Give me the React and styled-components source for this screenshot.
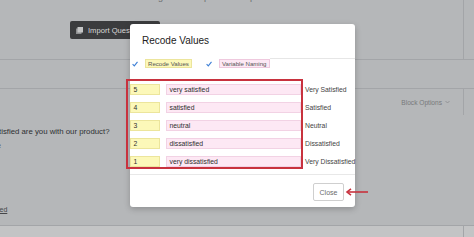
import React from 'react';
import styled, { createGlobalStyle } from 'styled-components';

const GlobalStyle = createGlobalStyle`
  html, body { margin: 0; padding: 0; }
  body {
    width: 474px;
    height: 237px;
    overflow: hidden;
    background: #b5b7b9;
    font-family: "Liberation Sans", Arial, sans-serif;
  }
`;

const Page = styled.div`
  position: relative;
  display: flex;
  flex-direction: column;
  width: 474px;
  height: 237px;
  overflow: hidden;
`;

// background page (dimmed by the modal overlay)
const Split = styled.div`
  display: grid;
  grid-template-columns: 464px 1fr;
  height: ${p => p.h}px;
  border-bottom: ${p => (p.line ? '1px solid #a3a5a8' : 'none')};
  flex-shrink: 0;
`;

const Cell = styled.div`
  display: flex;
  flex-direction: column;
  border-right: ${p => (p.edge ? '1px solid #a3a5a8' : 'none')};
  overflow: hidden;
`;

const TopFragment = styled.div`
  margin-top: -8px;
  margin-left: 158px;
  font-size: 9px;
  line-height: 10px;
  color: #6a6c6e;
  white-space: nowrap;
`;

const ImportButton = styled.div`
  display: flex;
  align-items: center;
  gap: 5px;
  margin: 19px 0 0 70px;
  width: 90px;
  height: 18px;
  padding-left: 6px;
  box-sizing: border-box;
  background: #3b3c3e;
  border-radius: 2px;
  color: #d8d8d8;
  font-size: 7.6px;
  white-space: nowrap;
`;

const BlockOptions = styled.div`
  display: flex;
  align-items: center;
  justify-content: flex-end;
  gap: 3px;
  height: 100%;
  padding-right: 13px;
  font-size: 6.6px;
  color: #77797b;
`;

const Body = styled.div`
  flex: 1;
  display: flex;
  flex-direction: column;
  border-bottom: 1px solid #a3a5a8;
`;

const Question = styled.div`
  margin: 12px 0 0 -1px;
  font-size: 7.8px;
  color: #2e3032;
  white-space: nowrap;
`;

const Fragment = styled.div`
  margin: ${p => p.m};
  font-size: 7px;
  color: #45474a;
  white-space: nowrap;
  text-decoration: ${p => (p.under ? 'underline' : 'none')};
`;

const BottomStrip = styled.div`
  display: grid;
  grid-template-columns: 464px 1fr;
  height: 11px;
  background: #c3c4c5;
  flex-shrink: 0;
`;

// modal
const Modal = styled.div`
  position: absolute;
  left: 130px;
  top: 24px;
  width: 225px;
  height: 183px;
  background: #fff;
  border-radius: 3px;
  box-shadow: 0 2px 6px rgba(0, 0, 0, 0.22);
  display: flex;
  flex-direction: column;
`;

const Title = styled.div`
  padding: 11px 0 0 12px;
  font-size: 10px;
  line-height: 12px;
  color: #222;
`;

const ToggleRow = styled.div`
  display: flex;
  align-items: flex-start;
  margin-top: 11px;
  height: 11px;
`;

const Check = styled.svg`
  width: 6px;
  height: 6px;
  margin: 3px 0 0 ${p => p.ml}px;
  flex-shrink: 0;
`;

const ToggleLabel = styled.div`
  margin: 1.3px 0 0 7px;
  height: 9px;
  padding: 0 2px;
  box-sizing: border-box;
  display: flex;
  align-items: center;
  font-size: 6.1px;
  color: #555;
  white-space: nowrap;
  background: ${p => (p.tone === 'yellow' ? '#fcf8b9' : '#fde8f4')};
  border: 1px solid ${p => (p.tone === 'yellow' ? '#ece59c' : '#efc9de')};
  flex-shrink: 0;
`;

const Rule = styled.div`
  flex: 1;
  height: 1px;
  background: #e6e6e6;
`;

const Rows = styled.div`
  display: flex;
  flex-direction: column;
  gap: 7px;
  margin-top: 14.7px;
`;

const Row = styled.div`
  display: flex;
  align-items: center;
  height: 11px;
`;

const Field = styled.div`
  width: ${p => p.w}px;
  height: 100%;
  margin-right: ${p => p.mr}px;
  padding-left: 2.5px;
  box-sizing: border-box;
  display: flex;
  align-items: center;
  font-size: 6.8px;
  color: #2f2f2f;
  background: ${p => (p.tone === 'yellow' ? '#fcf8b9' : '#fde8f4')};
  border: 1px solid ${p => (p.tone === 'yellow' ? '#ece59c' : '#f2d2e4')};
  flex-shrink: 0;
`;

const ChoiceText = styled.div`
  font-size: 6.8px;
  color: #444;
  white-space: nowrap;
`;

const Footer = styled.div`
  margin-top: 7.5px;
  border-top: 1px solid #e8e8e8;
  display: flex;
  justify-content: flex-end;
  padding: 8px 11px 0 0;
`;

const CloseButton = styled.button`
  width: 31px;
  height: 18px;
  padding: 0;
  background: #fff;
  border: 1px solid #cfcfcf;
  border-radius: 2px;
  font-family: inherit;
  font-size: 7px;
  color: #6b6b6b;
`;

// annotations drawn over the screenshot
const Highlight = styled.div`
  position: absolute;
  left: 126px;
  top: 79px;
  width: 177px;
  height: 90px;
  box-sizing: border-box;
  border: 2px solid #c8323e;
`;

const Arrow = styled.svg`
  position: absolute;
  left: 345px;
  top: 187px;
  width: 24px;
  height: 10px;
`;

const rows = [
  { value: '5', name: 'very satisfied', label: 'Very Satisfied' },
  { value: '4', name: 'satisfied', label: 'Satisfied' },
  { value: '3', name: 'neutral', label: 'Neutral' },
  { value: '2', name: 'dissatisfied', label: 'Dissatisfied' },
  { value: '1', name: 'very dissatisfied', label: 'Very Dissatisfied' },
];

const Tick = ({ ml }) => (
  <Check ml={ml} viewBox="0 0 6 6">
    <path d="M0.6 3.2 L2.3 4.9 L5.5 0.8" fill="none" stroke="#3d7fd6" strokeWidth="1.1" />
  </Check>
);

const App = () => {
  return (
    <>
      <GlobalStyle />
      <Page>
        <Split h={59} line>
          <Cell edge>
            <TopFragment>g · · · · · · ·  p · · · · · · · p</TopFragment>
            <ImportButton>
              <svg width="7" height="7" viewBox="0 0 7 7">
                <rect x="0" y="1.5" width="5.5" height="5.5" fill="#8e8f91" />
                <rect x="1.5" y="0" width="5.5" height="5.5" fill="#c4c5c6" />
              </svg>
              Import Questions
            </ImportButton>
          </Cell>
          <Cell />
        </Split>
        <Split h={28} line>
          <Cell />
          <Cell />
        </Split>
        <Split h={26}>
          <Cell edge>
            <BlockOptions>
              Block Options
              <svg width="5" height="4" viewBox="0 0 5 4">
                <path d="M0.5 1 L2.5 3 L4.5 1" fill="none" stroke="#8a8c8e" strokeWidth="0.8" />
              </svg>
            </BlockOptions>
          </Cell>
          <Cell />
        </Split>
        <Body>
          <Question>tisfied are you with our product?</Question>
          <Fragment m="6px 0 0 -3px">e</Fragment>
          <Fragment m="auto 0 12px -4px" under>fied</Fragment>
        </Body>
        <BottomStrip>
          <Cell edge />
          <Cell />
        </BottomStrip>

        <Modal>
          <Title>Recode Values</Title>
          <ToggleRow>
            <Tick ml={2} />
            <ToggleLabel tone="yellow">Recode Values</ToggleLabel>
            <Tick ml={14} />
            <ToggleLabel tone="pink">Variable Naming</ToggleLabel>
            <Rule />
          </ToggleRow>
          <Rows>
            {rows.map(r => (
              <Row key={r.value}>
                <Field tone="yellow" w={30} mr={6}>{r.value}</Field>
                <Field tone="pink" w={135} mr={4}>{r.name}</Field>
                <ChoiceText>{r.label}</ChoiceText>
              </Row>
            ))}
          </Rows>
          <Footer>
            <CloseButton>Close</CloseButton>
          </Footer>
        </Modal>

        <Highlight />
        <Arrow viewBox="0 0 24 10">
          <path d="M23 5 H3" stroke="#c8323e" strokeWidth="1.6" />
          <path d="M6 1.8 L2 5 L6 8.2" fill="none" stroke="#c8323e" strokeWidth="1.6" />
        </Arrow>
      </Page>
    </>
  );
};

export default App;
